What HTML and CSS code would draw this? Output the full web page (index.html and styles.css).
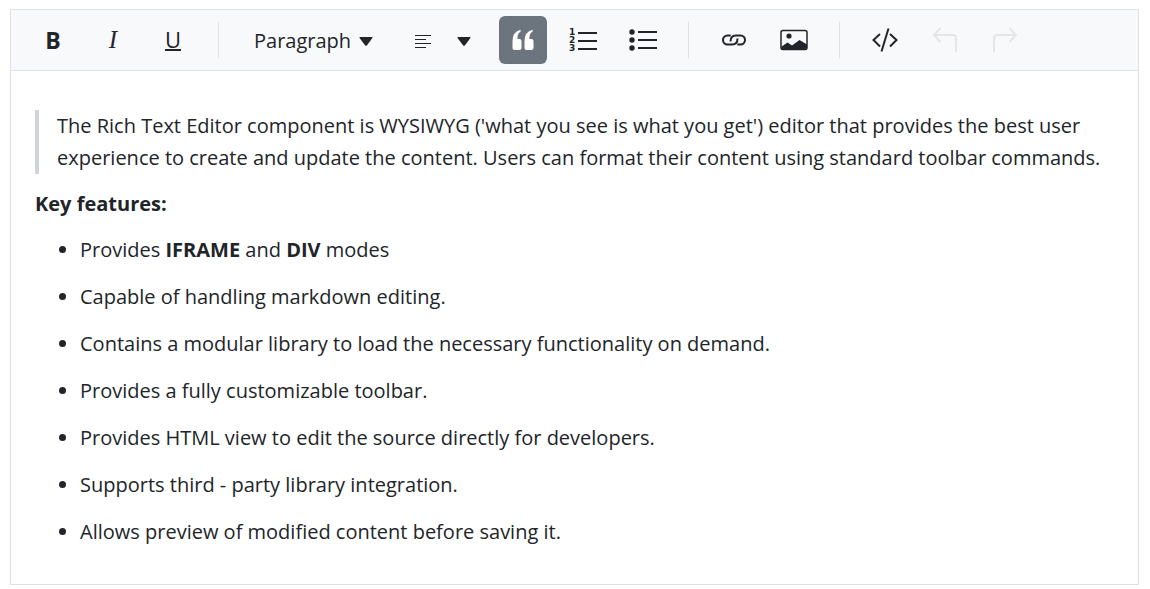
FILE: index.html
```html
<!DOCTYPE html>
<html lang="en">
<head>
  <meta charset="UTF-8">
  <meta name="viewport" content="width=device-width, initial-scale=1.0">
  <title>Rich Text Editor</title>
  <link rel="stylesheet" href="styles.css">
</head>
<body>
  <div class="editor">
    <div class="toolbar" role="toolbar" aria-label="Formatting">
      <button type="button" class="tool bold" aria-label="Bold">B</button>
      <button type="button" class="tool italic" aria-label="Italic">I</button>
      <button type="button" class="tool underline" aria-label="Underline"><span>U</span></button>
      <span class="separator"></span>
      <button type="button" class="tool format" aria-haspopup="true">
        Paragraph
        <svg class="caret" width="14" height="9" viewBox="0 0 14 9"><path d="M1.2 0h11.6q1.2 0 .6 1L8 8.2q-1 1-2 0L.6 1Q0 0 1.2 0z"/></svg>
      </button>
      <button type="button" class="tool align" aria-label="Alignment" aria-haspopup="true">
        <svg width="16" height="14" viewBox="0 0 16 14"><path class="thin" d="M0 1h16M0 5h11M0 9h16M0 13h11"/></svg>
        <svg class="caret" width="14" height="9" viewBox="0 0 14 9"><path d="M1.2 0h11.6q1.2 0 .6 1L8 8.2q-1 1-2 0L.6 1Q0 0 1.2 0z"/></svg>
      </button>
      <button type="button" class="tool active" aria-label="Blockquote" aria-pressed="true">
        <svg width="22" height="22" viewBox="0 0 22 22"><path d="M8.6.8v1.8Q5.3 4.6 5.3 10h2.2q2 0 2 2v7q0 2-2 2h-5q-2 0-2-2v-6.500Q.5 2.6 8.6.8zM20.6.8v1.8q-3.3 2-3.3 7.4h2.2q2 0 2 2v7q0 2-2 2h-5q-2 0-2-2v-6.500q0-9.900 8.100-11.700z"/></svg>
      </button>
      <button type="button" class="tool" aria-label="Numbered list">
        <svg width="28" height="24" viewBox="0 0 28 24"><path class="line" d="M9 5h19M9 13h19M9 21h19"/><text x="0" y="7">1</text><text x="0" y="15">2</text><text x="0" y="23">3</text></svg>
      </button>
      <button type="button" class="tool" aria-label="Bulleted list">
        <svg width="28" height="22" viewBox="0 0 28 22"><circle cx="3" cy="3" r="2.700"/><circle cx="3" cy="11" r="2.700"/><circle cx="3" cy="19" r="2.700"/><path class="line" d="M9 3h19M9 11h19M9 19h19"/></svg>
      </button>
      <span class="separator"></span>
      <button type="button" class="tool" aria-label="Insert link">
        <svg width="24" height="12" viewBox="0 0 24 12"><path class="line" d="M8.500 7.500C8.500 4 10.500 1.500 14 1.500h4.500a4.500 4.500 0 0 1 0 9h-3.200M15.500 4.500C15.500 8 13.500 10.500 10 10.500H5.500a4.500 4.500 0 0 1 0-9h3.200"/></svg>
      </button>
      <button type="button" class="tool" aria-label="Insert image">
        <svg width="28" height="22" viewBox="0 0 28 22"><rect class="frame" x="1" y="1.500" width="26" height="19" rx="2"/><circle cx="9" cy="7" r="2.600"/><path d="M1 18l6.500-4.500 4.500 3L19.500 11l7.500 4.500V19.500q0 1-1 1H2q-1 0-1-1z"/></svg>
      </button>
      <span class="separator"></span>
      <button type="button" class="tool" aria-label="Source code">
        <svg width="26" height="24" viewBox="0 0 26 24"><path class="line" d="M8 6L1.500 12 8 18.500M18 6l6.500 6-6.500 6.500M16.500.5l-7 23"/></svg>
      </button>
      <button type="button" class="tool" aria-label="Undo" disabled>
        <svg width="26" height="26" viewBox="0 0 26 26"><path class="line" d="M8.500 1L2 8l6.500 7M2 8h19q3 0 3 3v14"/></svg>
      </button>
      <button type="button" class="tool" aria-label="Redo" disabled>
        <svg width="26" height="26" viewBox="0 0 26 26"><path class="line" d="M17.500 1L24 8l-6.500 7M24 8H5q-3 0-3 3v14"/></svg>
      </button>
    </div>
    <div class="content" contenteditable="true" spellcheck="false">
      <blockquote>The Rich Text Editor component is WYSIWYG ('what you see is what you get') editor that provides the best user experience to create and update the content. Users can format their content using standard toolbar commands.</blockquote>
      <p><b>Key features:</b></p>
      <ul>
        <li>Provides <b>IFRAME</b> and <b>DIV</b> modes</li>
        <li>Capable of handling markdown editing.</li>
        <li>Contains a modular library to load the necessary functionality on demand.</li>
        <li>Provides a fully customizable toolbar.</li>
        <li>Provides HTML view to edit the source directly for developers.</li>
        <li>Supports third - party library integration.</li>
        <li>Allows preview of modified content before saving it.</li>
      </ul>
    </div>
  </div>
</body>
</html>
```
FILE: styles.css
```css
body {
  margin: 0;
  padding: 9px 11px 4px 10px;
  font-family: 'Segoe UI', 'Open Sans', 'Noto Sans', sans-serif;
  font-size: 20px;
  line-height: 32px;
  color: #212529;
  background: #fff;
}
.editor {
  border: 1px solid #dee2e6;
}
.toolbar {
  display: flex;
  align-items: center;
  gap: 12px;
  padding: 6px 18px;
  background: #f8f9fa;
  border-bottom: 1px solid #dee2e6;
}
.tool {
  display: flex;
  align-items: center;
  justify-content: center;
  flex-shrink: 0;
  width: 48px;
  height: 48px;
  padding: 0;
  border: none;
  border-radius: 6px;
  background: transparent;
  color: inherit;
  font: inherit;
  cursor: pointer;
}
.tool svg {
  fill: currentColor;
  overflow: visible;
}
.tool svg .line,
.tool svg .frame,
.tool svg .thin {
  fill: none;
  stroke: currentColor;
  stroke-width: 2;
}
.tool svg .frame {
  stroke-width: 1.5;
}
.tool svg .thin {
  stroke-width: 1;
  shape-rendering: crispEdges;
}
.tool text {
  font: bold 9px 'DejaVu Sans', sans-serif;
}
.tool.active {
  background: #6c757d;
  color: #fff;
}
.tool:disabled {
  color: #e3e6e9;
  cursor: default;
}
.bold {
  font-size: 23px;
  font-weight: 700;
}
.italic {
  font-family: 'Liberation Serif', serif;
  font-size: 25px;
  font-style: italic;
}
.underline span {
  border-bottom: 2px solid currentColor;
  font-size: 22px;
  line-height: 19px;
}
.format {
  width: auto;
  gap: 8px;
  padding: 2px 14px 0;
}
.align {
  width: 88px;
  gap: 26px;
  padding-top: 2px;
}
.separator {
  width: 1px;
  height: 36px;
  margin: 0 9px;
  background: #dee2e6;
}
.content {
  padding: 39px 24px 36px;
  outline: none;
}
.content blockquote {
  margin: 0 0 14px;
  padding-left: 18px;
  border-left: 4px solid #ced4da;
}
.content p {
  margin: 0 0 14px;
}
.content ul {
  margin: 0;
  padding-left: 45px;
}
.content li + li {
  margin-top: 15px;
}
```
